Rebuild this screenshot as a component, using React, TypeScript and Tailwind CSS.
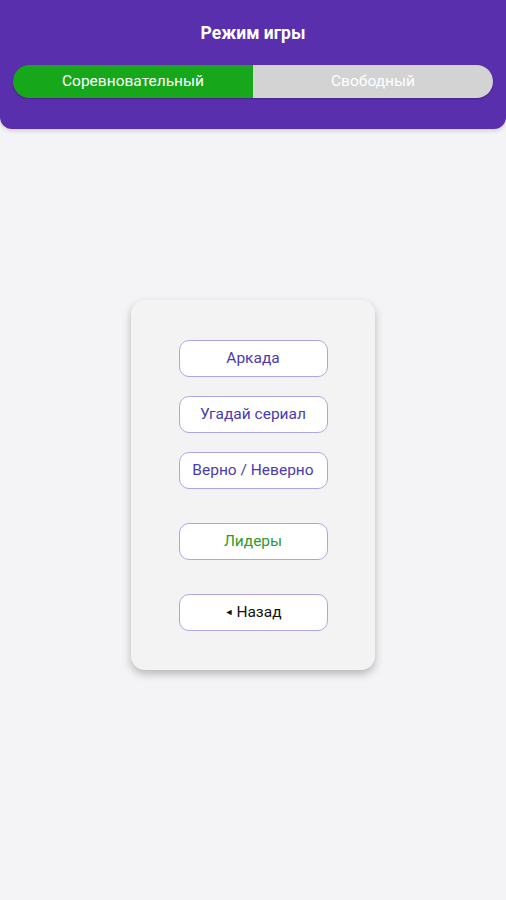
import { useState } from 'react';

const menuItems = [
  { label: 'Аркада', color: 'text-[#4b3bb0]' },
  { label: 'Угадай сериал', color: 'text-[#4b3bb0]' },
  { label: 'Верно / Неверно', color: 'text-[#4b3bb0]' },
];

function MenuButton({ children, className = '' }: { children: React.ReactNode; className?: string }) {
  return (
    <button
      type="button"
      className={`w-[149px] h-[37px] rounded-[10px] border border-[#aea6e2] bg-white text-[15.5px] flex items-center justify-center ${className}`}
    >
      {children}
    </button>
  );
}

export default function App() {
  const [mode, setMode] = useState<'comp' | 'free'>('comp');

  return (
    <div className="min-h-[900px] bg-[#f4f4f6] font-['Roboto',sans-serif]">
      <div className="bg-[#5a2fad] rounded-b-[12px] shadow-[0_2px_4px_rgba(0,0,0,0.15)] px-[13px] pt-[21px] pb-[31px]">
        <h1 className="text-white font-bold text-[17.5px] text-center leading-[24px]">Режим игры</h1>
        <div className="mt-[20px] flex h-[33px] rounded-full overflow-hidden shadow-[0_1px_2px_rgba(0,0,0,0.25)]">
          <button
            type="button"
            onClick={() => setMode('comp')}
            className={`flex-1 text-[15.5px] ${mode === 'comp' ? 'bg-[#17a71a] text-white' : 'bg-[#d3d3d3] text-white'}`}
          >
            Соревновательный
          </button>
          <button
            type="button"
            onClick={() => setMode('free')}
            className={`flex-1 text-[15.5px] ${mode === 'free' ? 'bg-[#17a71a] text-white' : 'bg-[#d3d3d3] text-white'}`}
          >
            Свободный
          </button>
        </div>
      </div>

      <div className="flex justify-center pt-[171px]">
        <div className="w-[244px] h-[370px] bg-[#f3f3f3] rounded-[14px] shadow-[0_4px_8px_rgba(0,0,0,0.25)] flex flex-col items-center pt-[40px]">
          <div className="flex flex-col gap-[19px]">
            {menuItems.map((m) => (
              <MenuButton key={m.label} className={m.color}>
                {m.label}
              </MenuButton>
            ))}
          </div>
          <MenuButton className="mt-[34px] text-[#2e9a2e]">Лидеры</MenuButton>
          <MenuButton className="mt-[34px] text-[#111]">
            <span className="text-[9px] mr-[3px]">◄</span>Назад
          </MenuButton>
        </div>
      </div>
    </div>
  );
}
